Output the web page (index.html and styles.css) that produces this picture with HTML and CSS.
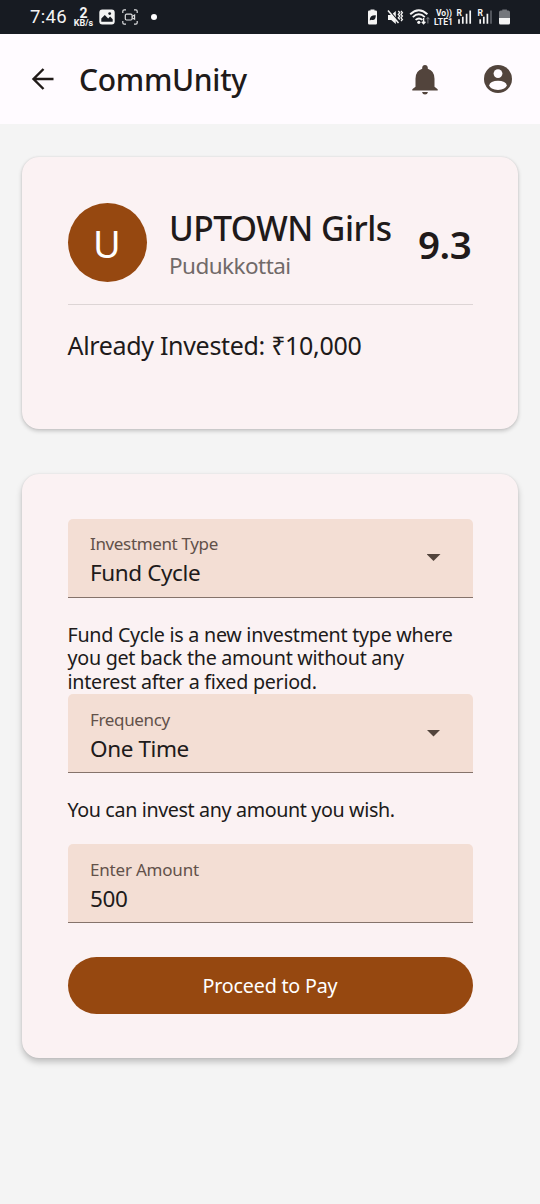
FILE: index.html
```
<!DOCTYPE html>
<html lang="en">
<head>
<meta charset="utf-8">
<title>CommUnity</title>
<link rel="stylesheet" href="styles.css">
</head>
<body>
<div class="status">
  <span class="clock">7:46</span>
  <span class="rate"><b>2</b><small>KB/s</small></span>
  <svg class="ic-photo" width="16" height="16" viewBox="0 0 16 16"><rect x=".3" y=".5" width="15.4" height="15" rx="3" fill="#f4f4f4"/><path d="M2.3 12.7V9.5L5.8 6l3.4 3.4 1.9-1.8 2.6 2.6v2.5z" fill="#171b22"/><circle cx="10.7" cy="4.6" r="1.4" fill="#171b22"/></svg>
  <svg class="ic-record" width="16" height="16" viewBox="0 0 16 16" fill="none" stroke="#dcdddf" stroke-width="1.2"><path d="M.8 4V2.2Q.8.8 2.2.8H4M12 .8h1.8q1.4 0 1.4 1.4V4M15.200 12v1.800q0 1.400-1.400 1.400H12M4 15.200H2.200Q.8 15.200.8 13.800V12"/><rect x="3.300" y="5.200" width="6.800" height="5.800" rx="1.200"/><path d="M10.100 7.500l2.500-1.500v4.300l-2.500-1.500"/></svg>
  <span class="dot"></span>
  <svg class="ic-right" width="146" height="22" viewBox="0 0 146 22" fill="none">
    <path d="M3.500 3.500V2.600h4v.9h1.300q1.200 0 1.200 1.200v11.600q0 1.200-1.200 1.200H2.200Q1 17.500 1 16.300V4.700q0-1.200 1.200-1.200z" fill="#f4f4f4"/>
    <path d="M2.800 13.500q-.4-5.500 6-5.300.2 5.600-4.600 4.500z" fill="#171b22"/>
    <path d="M21 8h3.200l4.600-4v13l-4.600-4H21z" fill="#f4f4f4"/><path d="M22.300 3.500 32 15" stroke="#171b22" stroke-width="1.200"/><path d="M21 3.500 31.500 16" stroke="#f4f4f4" stroke-width="1.500"/><path d="M31.300 4l1.500 1.700-1.500 1.700 1.500 1.700-1.500 1.700 1.500 1.700M34 4l1.400 1.700L34 7.400l1.400 1.700L34 10.800l1.400 1.700-1.400 1.700" stroke="#f4f4f4" stroke-width="1.300"/>
    <path d="M43.200 7.200q8.600-8 17.200 0M45.800 10.100q6-5.500 12 0M48.600 12.900q3.400-3 6.800 0" stroke="#f4f4f4" stroke-width="1.900"/><circle cx="51.800" cy="15.300" r="1.600" fill="#f4f4f4"/>
    <path d="M56.600 11v5.800M54.800 14.800l1.800 2 1.800-2" stroke="#f4f4f4" stroke-width="1.400"/><path d="M60.900 16.500v-6M59.300 12.300l1.600-1.800 1.600 1.800" stroke="#7d8086"/>
    <text x="69" y="9.300" class="tiny" textLength="16">Vo))</text><text x="67" y="18" class="tiny lte" textLength="19">LTE1</text>
    <text x="89.500" y="9.200" class="tiny">R</text><path d="M92 16.800v-4.600M95.800 16.800V9.800M99.600 16.800V6.700M103.200 16.800V3.500" stroke="#f4f4f4" stroke-width="1.700"/>
    <text x="110.500" y="9.200" class="tiny">R</text><path d="M113.200 16.800v-4.600M116.800 16.800V9.800M120.400 16.800V6.700" stroke="#f4f4f4" stroke-width="1.700"/><path d="M124 16.800V3.500" stroke="#5d6067" stroke-width="1.700"/>
    <path d="M135.300 3.400V2.500h4.600v.9h1.300q1.800 0 1.800 1.800V11h-11V5.200q0-1.800 1.800-1.800z" fill="#74777c"/><path d="M132 11h11v5q0 1.600-1.600 1.600h-7.800q-1.600 0-1.600-1.600z" fill="#f4f4f4"/>
  </svg>
</div>
<header class="appbar">
  <svg class="ic-back" width="24" height="24" viewBox="0 0 24 24" fill="none" stroke="#201a18" stroke-width="2.400"><path d="M23.500 12H3.500M13.500 2 3.500 12l10 10"/></svg>
  <h1>CommUnity</h1>
  <svg class="ic-bell" width="26" height="30" viewBox="0 0 26 30" fill="#52443c"><path d="M13 0c1.700 0 2.800 1.200 2.800 2.700v1q6.700 2 6.700 10v8l3.200 2.500v1.200H.3v-1.200l3.200-2.500v-8q0-8 6.700-10v-1C10.200 1.200 11.300 0 13 0zM10 27h6q-.6 2.600-3 2.600T10 27z"/></svg>
  <svg class="ic-user" width="28" height="28" viewBox="0 0 28 28"><circle cx="14" cy="14" r="14" fill="#52443c"/><circle cx="14" cy="8.600" r="4.400" fill="#fffbff"/><ellipse cx="14" cy="20.300" rx="8.700" ry="4.600" fill="#fffbff"/></svg>
</header>
<main>
  <section class="card group">
    <div class="summary">
      <div class="avatar">U</div>
      <div class="who"><h2>UPTOWN Girls</h2><p>Pudukkottai</p></div>
      <div class="score">9.3</div>
    </div>
    <p class="invested">Already Invested: ₹10,000</p>
  </section>
  <section class="card form">
    <div class="field"><div><label>Investment Type</label><p>Fund Cycle</p></div><i class="caret"></i></div>
    <p class="note n1">Fund Cycle is a new investment type where<br>you get back the amount without any<br>interest after a fixed period.</p>
    <div class="field"><div><label>Frequency</label><p>One Time</p></div><i class="caret"></i></div>
    <p class="note n2">You can invest any amount you wish.</p>
    <div class="field"><div><label class="amount">Enter Amount</label><p>500</p></div></div>
    <button class="pay">Proceed to Pay</button>
  </section>
</main>
</body>
</html>
```
FILE: styles.css
```
* { box-sizing: border-box; margin: 0; padding: 0; }
body { width: 540px; height: 1204px; background: #f4f4f4; color: #201a1a; font-family: "Noto Sans", sans-serif; overflow: hidden; white-space: nowrap; }
svg { display: block; flex: none; }
.status { display: flex; height: 34px; align-items: center; background: #171b22; color: #f4f4f4; padding-left: 30px; }
.clock { width: 43px; font: 18.500px/34px Roboto, sans-serif; letter-spacing: .3px; }
.rate { width: 21px; display: flex; flex-direction: column; align-items: center; font-family: Roboto, sans-serif; }
.rate b { font-size: 14px; line-height: 12px; }
.rate small { font-size: 9px; line-height: 8px; font-weight: 700; }
.ic-photo { margin-left: 5px; }
.ic-record { margin-left: 7px; }
.dot { width: 6px; height: 6px; margin-left: 13px; border-radius: 50%; background: #fff; }
.ic-right { margin: 7px 0 0 210px; align-self: flex-start; }
.tiny { font: 700 8.500px Roboto, sans-serif; fill: #f4f4f4; }
.appbar { display: flex; align-items: center; height: 90px; background: #fffbff; padding: 0 28px 0 30px; }
h1 { font-size: 30px; line-height: 40px; font-weight: 500; letter-spacing: -.3px; margin: 2px 0 0 25px; width: 333px; }
.ic-bell { margin-top: 1px; }
.ic-user { margin-left: 46px; }
main { display: flex; flex-direction: column; gap: 45px; padding: 33px 22px 0; }
.card { background: #fbf2f3; border-radius: 17px; padding: 44.500px 45.500px 0; box-shadow: 0 2px 4px rgba(0,0,0,.2), 0 0 2px rgba(0,0,0,.1); }
.group { height: 272px; padding-top: 46px; }
.form { height: 584px; box-shadow: 0 4px 6px rgba(0,0,0,.22), 0 0 2px rgba(0,0,0,.1); }
.summary { display: flex; height: 102px; border-bottom: 1px solid #ddd5d5; }
.avatar { width: 79px; height: 79px; border-radius: 50%; background: #964810; color: #fff; font-size: 38px; line-height: 81px; text-align: center; }
.who { margin-left: 22.500px; width: 249px; }
h2 { font-size: 33.500px; line-height: 44px; font-weight: 500; letter-spacing: -.48px; margin-top: 3px; }
.who p { font-size: 22.500px; line-height: 30px; letter-spacing: -.55px; color: #716a69; margin-top: 1px; }
.score { font-size: 38.500px; line-height: 82px; font-weight: 600; letter-spacing: -.4px; }
.invested { font-size: 25px; line-height: 34px; letter-spacing: -.32px; margin-top: 23px; }
.field { display: flex; justify-content: space-between; height: 79px; background: #f3ded4; border-bottom: 1px solid #85736b; border-radius: 5px 5px 0 0; padding: 13.500px 32px 0 22.500px; }
.field label { display: block; font-size: 17px; line-height: 24px; letter-spacing: -.35px; color: #62514a; }
.field .amount { letter-spacing: -.2px; }
.field p { font-size: 22.500px; line-height: 33px; letter-spacing: -.4px; }
.caret { margin-top: 22px; width: 14px; height: 7px; background: #52443c; clip-path: polygon(0 0, 100% 0, 50% 100%); }
.note { font-size: 19.700px; line-height: 23.500px; letter-spacing: -.27px; }
.n1 { height: 96.500px; padding-top: 25px; }
.n2 { height: 71px; padding-top: 25px; letter-spacing: -.37px; }
.pay { display: block; width: 405px; height: 56.500px; margin-top: 34px; border: 0; border-radius: 29px; background: #964810; color: #fff; font: 19.700px/58px "Noto Sans", sans-serif; letter-spacing: -.2px; }
```
